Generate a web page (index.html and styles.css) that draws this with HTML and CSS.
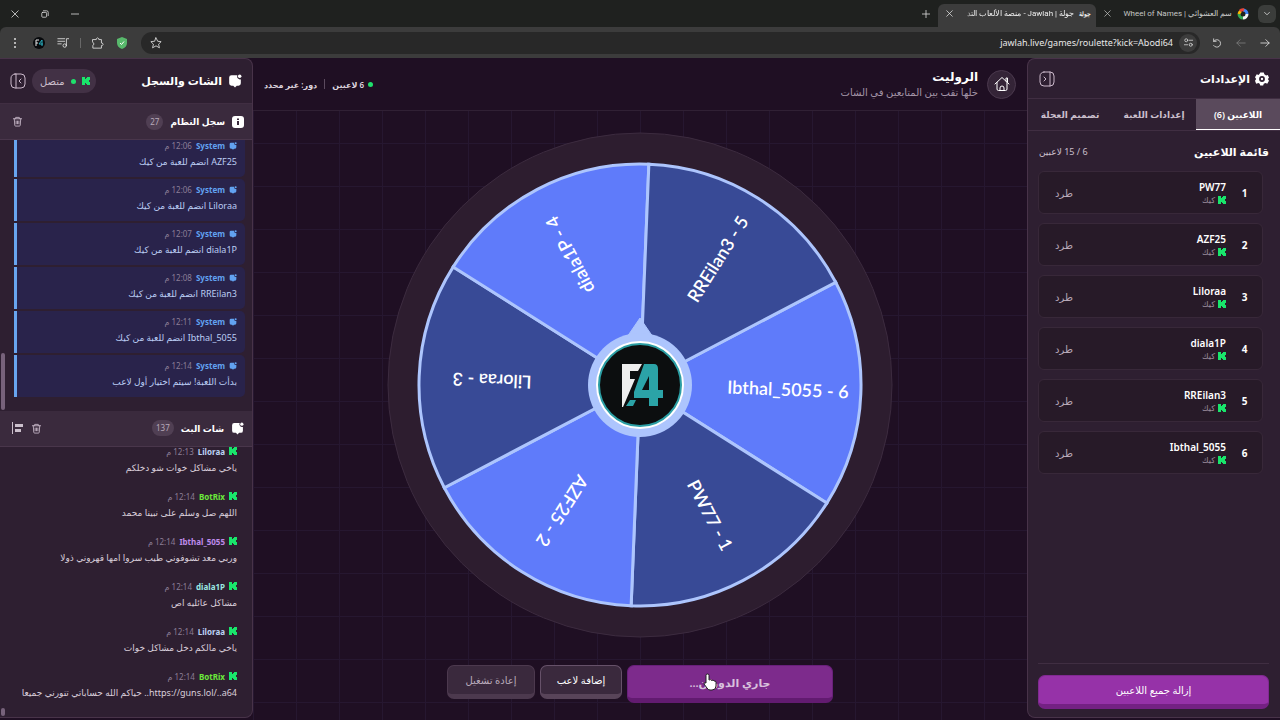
FILE: index.html
```
<!DOCTYPE html>
<html lang="ar" dir="rtl">
<head>
    <meta charset="UTF-8">
    <meta name="viewport" content="width=device-width, initial-scale=1.0">
    <title>جولة | Jawlah - منصة الألعاب</title>
    <link rel="stylesheet" href="styles.css">
</head>
<body>
    <!-- Shared icons -->
    <svg class="sprite" aria-hidden="true">
        <symbol id="kick" viewBox="0 0 8 8"><path d="M0 0H3V2H4V1H5V0H8V3H7V4H6.500V4H7V5H8V8H5V7H4V6H3V8H0z"/></symbol>
        <symbol id="chat" viewBox="0 0 24 24"><path d="M6 2h10a5 5 0 0 0 6 7v7a4 4 0 0 1-4 4h-3l-3 3-3-3H6a4 4 0 0 1-4-4V6a4 4 0 0 1 4-4z"/><circle cx="20" cy="4" r="3"/></symbol>
        <symbol id="trash" viewBox="0 0 24 24"><path d="M3 6h18M8 6V3h8v3M5 6l1 14a2 2 0 0 0 2 2h8a2 2 0 0 0 2-2l1-14M9 11v6M12 11v6M15 11v6"/></symbol>
        <symbol id="close" viewBox="0 0 10 10"><path d="M1 1l8 8M9 1L1 9"/></symbol>
    </svg>

    <header class="browser">
        <div class="tab-bar">
            <button class="tab-search" aria-label="Search tabs"><svg class="line" width="8" height="8" viewBox="0 0 10 10"><path d="M2 3l3 3 3-3"/></svg></button>
            <div class="browser-tab">
                <svg width="12" height="12" viewBox="0 0 12 12" fill="none" stroke-width="3"><path d="M6 2a4 4 0 0 1 4 4" stroke="#4285f4"/><path d="M10 6a4 4 0 0 1-4 4" stroke="#f1f3f4"/><path d="M6 10a4 4 0 0 1-4-4" stroke="#34a853"/><path d="M2 6a4 4 0 0 1 2-3" stroke="#fbbc05"/><path d="M3 3a4 4 0 0 1 4-1" stroke="#ea4335"/></svg>
                <span class="tab-title">سم العشوائي | Wheel of Names</span>
                <button aria-label="Close tab"><svg class="line" width="7" height="7"><use href="#close"/></svg></button>
            </div>
            <div class="browser-tab current">
                <span class="favicon">جولة</span>
                <span class="tab-title">جولة | Jawlah - منصة الألعاب التد</span>
                <button aria-label="Close tab"><svg class="line" width="7" height="7"><use href="#close"/></svg></button>
            </div>
            <button class="new-tab" aria-label="New tab"><svg class="line" width="8" height="8" viewBox="0 0 10 10"><path d="M5 0v10M0 5h10"/></svg></button>
            <div class="window-controls">
                <button aria-label="Minimize"><svg class="line" width="8" height="8" viewBox="0 0 10 10"><path d="M0 5h10"/></svg></button>
                <button aria-label="Restore"><svg class="line" width="8" height="8" viewBox="0 0 10 10"><rect x="1" y="3" width="6" height="6" rx="1"/><path d="M3 1h4a2 2 0 0 1 2 2v4"/></svg></button>
                <button aria-label="Close"><svg class="line" width="8" height="8"><use href="#close"/></svg></button>
            </div>
        </div>
        <div class="toolbar">
            <button aria-label="Forward"><svg class="line" width="10" height="10" viewBox="0 0 12 12"><path d="M1 6h10M7 2l4 4-4 4"/></svg></button>
            <button class="dim" aria-label="Back"><svg class="line" width="10" height="10" viewBox="0 0 12 12"><path d="M11 6H1M5 2L1 6l4 4"/></svg></button>
            <button aria-label="Reload"><svg class="line" width="10" height="10" viewBox="0 0 12 12"><path d="M2 4a4.500 4.500 0 1 1 0 5M2 1v3h3"/></svg></button>
            <div class="address">
                <button class="site-info" aria-label="Site information"><svg class="line" width="9" height="9" viewBox="0 0 12 12"><circle cx="3" cy="3" r="2"/><path d="M7 3h5M0 9h5"/><circle cx="9" cy="9" r="2"/></svg></button>
                <input type="text" dir="ltr" value="jawlah.live/games/roulette?kick=Abodi64" aria-label="Address">
                <button aria-label="Bookmark"><svg class="line" width="12" height="12" viewBox="0 0 14 14"><path d="M7 1l2 4 4 .4-3 3 1 4.200-4-2.300-4 2.300 1-4.200-3-3L5 5z"/></svg></button>
            </div>
            <button aria-label="Shield"><svg width="12" height="12" viewBox="0 0 12 12"><path d="M6 0l5 2v4c0 3-2 5-5 6-3-1-5-3-5-6V2z" fill="#58b96c"/><path d="M4 6l1.500 1.500L8 4.500" fill="none" stroke="#fff"/></svg></button>
            <button aria-label="Extensions"><svg class="line" width="12" height="12" viewBox="0 0 14 14"><path d="M1 3h4V2q1.500-2 3 0v1h3v4h1q2 1.500 0 3h-1v3H1v-3q3-1.500 0-4z"/></svg></button>
            <span class="divider"></span>
            <button aria-label="Media"><svg class="line" width="12" height="12" viewBox="0 0 14 14"><path d="M1 2h8M1 5h8M1 8h4M11 10V2h3"/><circle cx="9" cy="10" r="2"/></svg></button>
            <button aria-label="Profile"><svg width="12" height="12" viewBox="0 0 12 12"><circle cx="6" cy="6" r="6" fill="#07090c"/><path d="M3 9V3h3M3 6h2" fill="none" stroke="#e5e5e5"/><path d="M9 9V3L6 7h4" fill="none" stroke="#2bb0c0"/></svg></button>
            <button aria-label="Menu"><svg width="10" height="12" viewBox="0 0 10 12" fill="#ddd"><circle cx="5" cy="2" r="1"/><circle cx="5" cy="6" r="1"/><circle cx="5" cy="10" r="1"/></svg></button>
        </div>
    </header>

    <div class="app">
        <aside class="panel settings">
            <div class="panel-header">
                <svg width="14" height="14" viewBox="0 0 24 24" fill="#fff" fill-rule="evenodd"><path d="M9 1h6l1 3 3 2 3-1 2 5-2 2 2 3-3 5-3-1-3 1-1 3H9l-1-3-2-1-4 1-2-5 2-3-2-3 3-5 3 1 2-2zM12 7a5 5 0 1 0 0 10 5 5 0 0 0 0-10zm0 3a2 2 0 1 1 0 4 2 2 0 0 1 0-4z"/></svg>
                <h2>الإعدادات</h2>
                <button class="push" aria-label="إخفاء الإعدادات"><svg class="line" width="16" height="16" viewBox="0 0 16 16"><rect x="1" y="1" width="14" height="14" rx="4"/><path d="M11 1v14M5 6l2 2-2 2"/></svg></button>
            </div>
            <nav class="tabs">
                <button class="active">اللاعبين (6)</button>
                <button>إعدادات اللعبة</button>
                <button>تصميم العجلة</button>
            </nav>
            <div class="players-head">
                <h3>قائمة اللاعبين</h3>
                <span>6 / 15 لاعبين</span>
            </div>
            <ol class="players">
                <li><b>1</b><div><strong>PW77</strong><small><svg><use href="#kick"/></svg>كيك</small></div><button>طرد</button></li>
                <li><b>2</b><div><strong>AZF25</strong><small><svg><use href="#kick"/></svg>كيك</small></div><button>طرد</button></li>
                <li><b>3</b><div><strong>Liloraa</strong><small><svg><use href="#kick"/></svg>كيك</small></div><button>طرد</button></li>
                <li><b>4</b><div><strong>diala1P</strong><small><svg><use href="#kick"/></svg>كيك</small></div><button>طرد</button></li>
                <li><b>5</b><div><strong>RREilan3</strong><small><svg><use href="#kick"/></svg>كيك</small></div><button>طرد</button></li>
                <li><b>6</b><div><strong>Ibthal_5055</strong><small><svg><use href="#kick"/></svg>كيك</small></div><button>طرد</button></li>
            </ol>
            <div class="settings-footer">
                <button class="btn btn-purple">إزالة جميع اللاعبين</button>
            </div>
        </aside>

        <main class="game">
            <div class="game-header">
                <a class="home" href="#" aria-label="الرئيسية"><svg class="line" width="16" height="16" viewBox="0 0 16 16"><path d="M1 8l7-6.500L15 8M3 6.500V13q0 1.500 1.500 1.500h7Q13 14.500 13 13V6.500M12 5V2h1.500v4M6 14v-2a2 2 0 0 1 4 0v2"/></svg></a>
                <div class="game-title">
                    <h1>الروليت</h1>
                    <p>خلها تقب بين المتابعين في الشات</p>
                </div>
                <div class="game-status">
                    <span class="players-count"><i class="dot"></i>6 لاعبين</span>
                    <span class="divider"></span>
                    <span>دور: غير محدد</span>
                </div>
            </div>
            <div class="stage">
                <svg class="wheel" viewBox="-253 -253 506 506">
                    <circle r="252" fill="#2d1d2f" stroke="#3c2b3f"/>
                    <g transform="rotate(2.300)">
                        <g stroke="#adc5fd" stroke-width="3">
                            <path fill="#5f7bfa" d="M0 0L191.400-110.500A221 221 0 0 1 191.400 110.500z"/>
                            <path fill="#384a96" d="M0 0L191.400 110.500A221 221 0 0 1 0 221z"/>
                            <path fill="#5f7bfa" d="M0 0L0 221A221 221 0 0 1-191.400 110.500z"/>
                            <path fill="#384a96" d="M0 0L-191.400 110.500A221 221 0 0 1-191.400-110.500z"/>
                            <path fill="#5f7bfa" d="M0 0L-191.400-110.500A221 221 0 0 1 0-221z"/>
                            <path fill="#384a96" d="M0 0L0-221A221 221 0 0 1 191.400-110.500z"/>
                        </g>
                        <g class="wheel-labels">
                            <text x="148" y="5">Ibthal_5055 - 6</text>
                            <text x="148" y="5" transform="rotate(60)">PW77 - 1</text>
                            <text x="148" y="5" transform="rotate(120)">AZF25 - 2</text>
                            <text x="148" y="5" transform="rotate(180)">Liloraa - 3</text>
                            <text x="148" y="5" transform="rotate(240)">diala1P - 4</text>
                            <text x="148" y="5" transform="rotate(300)">RREilan3 - 5</text>
                        </g>
                    </g>
                    <path d="M0-67L13-48H-13z" fill="#adc5fd" stroke="#adc5fd" stroke-linejoin="round"/>
                    <circle r="52" fill="#adc5fd"/>
                    <circle r="44" fill="#fff"/>
                    <circle r="41" fill="#0c0e0f" stroke="#2b9ea4" stroke-width="2"/>
                    <!-- centre logo -->
                    <path fill="#eee" d="M-18-21H2L-2-14H-10V-6H-5L-17 22H-18z"/>
                    <path fill="#2ba3a7" d="M4-21H14Q18-21 18-16V5H23V13H18V21H9V13H-6V7zM9-9L2 5H9zM-10 15H-4L-7 21H-14z"/>
                </svg>
                <div class="actions">
                    <button class="btn btn-spin">جاري الدوران...
                        <svg class="pointer" width="14" height="18" viewBox="0 0 14 18"><path d="M3 10V2.500a1.500 1.500 0 0 1 3 0V7q2-1 2.500.5 2-1 2.500.5 2-.5 2 1.500V13q0 4-4 4H7q-2 0-3-2L1 11q0-2 2-1z" fill="#fff" stroke="#222"/></svg>
                    </button>
                    <button class="btn btn-light">إضافة لاعب</button>
                    <button class="btn btn-muted">إعادة تشغيل</button>
                </div>
            </div>
        </main>

        <aside class="panel feed">
            <div class="panel-header">
                <svg width="14" height="14" fill="#fff"><use href="#chat"/></svg>
                <h2>الشات والسجل</h2>
                <span class="connection push"><svg width="8" height="8" fill="#19e56b"><use href="#kick"/></svg><i class="dot"></i>متصل</span>
                <button aria-label="إخفاء الشات"><svg class="line" width="16" height="16" viewBox="0 0 16 16"><rect x="1" y="1" width="14" height="14" rx="4"/><path d="M6 1v14M11 6L9 8l2 2"/></svg></button>
            </div>
            <div class="section-head">
                <svg width="12" height="12" viewBox="0 0 12 12"><rect width="12" height="12" rx="3" fill="#fff"/><path d="M6 5v4M6 2.500v1.500" stroke="#3a2a3d" stroke-width="2"/></svg>
                <h3>سجل النظام</h3>
                <span class="count">27</span>
                <button class="push" aria-label="مسح السجل"><svg class="line" width="11" height="11"><use href="#trash"/></svg></button>
            </div>
            <section class="log">
                <article><p class="meta"><svg><use href="#chat"/></svg><b>System</b><time>12:06 م</time></p><p>AZF25 انضم للعبة من كيك</p></article>
                <article><p class="meta"><svg><use href="#chat"/></svg><b>System</b><time>12:06 م</time></p><p>Liloraa انضم للعبة من كيك</p></article>
                <article><p class="meta"><svg><use href="#chat"/></svg><b>System</b><time>12:07 م</time></p><p>diala1P انضم للعبة من كيك</p></article>
                <article><p class="meta"><svg><use href="#chat"/></svg><b>System</b><time>12:08 م</time></p><p>RREilan3 انضم للعبة من كيك</p></article>
                <article><p class="meta"><svg><use href="#chat"/></svg><b>System</b><time>12:11 م</time></p><p>Ibthal_5055 انضم للعبة من كيك</p></article>
                <article><p class="meta"><svg><use href="#chat"/></svg><b>System</b><time>12:14 م</time></p><p>بدأت اللعبة! سيتم اختيار أول لاعب</p></article>
            </section>
            <div class="section-head">
                <svg width="13" height="13" fill="#fff"><use href="#chat"/></svg>
                <h3>شات البث</h3>
                <span class="count">137</span>
                <button class="push" aria-label="مسح الشات"><svg class="line" width="11" height="11"><use href="#trash"/></svg></button>
                <button aria-label="محاذاة"><svg width="11" height="12" viewBox="0 0 11 12" fill="#cbbfcc"><path d="M0 0h1v12H0zM3 2h8v3H3zM3 7h6v3H3z"/></svg></button>
            </div>
            <section class="chat">
                <article><p class="meta ice"><svg><use href="#kick"/></svg><b>Liloraa</b><time>12:13 م</time></p><p>ياخي مشاكل خوات شو دخلكم</p></article>
                <article><p class="meta lime"><svg><use href="#kick"/></svg><b>BotRix</b><time>12:14 م</time></p><p>اللهم صل وسلم على نبينا محمد</p></article>
                <article><p class="meta violet"><svg><use href="#kick"/></svg><b>Ibthal_5055</b><time>12:14 م</time></p><p>وربي معد تشوفوني طيب سروا امها قهروني ذولا</p></article>
                <article><p class="meta aqua"><svg><use href="#kick"/></svg><b>diala1P</b><time>12:14 م</time></p><p>مشاكل عائليه اص</p></article>
                <article><p class="meta ice"><svg><use href="#kick"/></svg><b>Liloraa</b><time>12:14 م</time></p><p>ياخي مالكم دخل مشاكل خوات</p></article>
                <article><p class="meta lime"><svg><use href="#kick"/></svg><b>BotRix</b><time>12:14 م</time></p><p>https://guns.lol/..a64.. حياكم الله حساباتي تنورني جميعا</p></article>
            </section>
        </aside>
    </div>
</body>
</html>
```
FILE: styles.css
```
* { box-sizing: border-box; }
body { margin: 0; height: 100vh; display: flex; flex-direction: column; overflow: hidden; background: #1f0f23; color: #fff; font-family: "Noto Sans", "DejaVu Sans", sans-serif; font-size: 9px; }
h1, h2, h3, p, ol { margin: 0; padding: 0; }
button { border: 0; padding: 0; background: none; color: inherit; font: inherit; cursor: pointer; display: flex; align-items: center; justify-content: center; flex: none; }
svg { flex: none; }
.sprite { position: absolute; width: 0; height: 0; }
.line { fill: none; stroke: currentColor; stroke-width: 1; stroke-linecap: round; stroke-linejoin: round; }
.push { margin-right: auto; }
.dot { width: 5px; height: 5px; border-radius: 50%; background: #1fe06c; }

/* Browser bar */
.browser { flex: none; color: #dedede; background: #1f211f; }
.tab-bar { height: 27px; display: flex; align-items: center; padding-right: 4px; }
.tab-search { width: 18px; height: 18px; border-radius: 6px; background: #3b3d3b; }
.browser-tab { width: 162px; height: 23px; margin-top: 4px; padding: 0 9px 4px 8px; display: flex; align-items: center; gap: 5px; font-family: Roboto, "Noto Sans", sans-serif; font-size: 8px; color: #c5c7c5; }
.browser-tab.current { width: 158px; padding: 0 5px 4px 8px; background: #3c3c3c; color: #eee; border-radius: 6px 6px 0 0; }
.tab-title { flex: 1; white-space: nowrap; overflow: hidden; }
.current .tab-title { mask-image: linear-gradient(to left, #000 85%, transparent); }
.favicon { font-size: 6px; font-weight: bold; }
.new-tab { width: 24px; height: 24px; }
.window-controls { margin-right: auto; display: flex; }
.window-controls button { width: 30px; height: 26px; }
.toolbar { height: 31px; padding: 0 3px; display: flex; align-items: center; background: #3c3c3c; border-radius: 6px 6px 0 0; }
.toolbar > button { width: 24px; height: 24px; }
.toolbar .dim { color: #7c7c7c; }
.toolbar > .divider { width: 1px; height: 10px; margin: 0 5px; background: #686868; }
.address { flex: 1; height: 22px; margin: 0 5px 0 7px; padding: 0 3px 0 9px; display: flex; align-items: center; gap: 4px; border-radius: 11px; background: #282828; }
.address input { flex: 1; min-width: 0; border: 0; outline: 0; background: none; color: #e8e8e8; font: 9px "Noto Sans", sans-serif; text-align: right; }
.site-info { width: 18px; height: 18px; border-radius: 50%; background: #3c3c3c; }

/* App layout */
.app { flex: 1; min-height: 0; display: grid; grid-template-columns: 253px 1fr 253px; grid-template-rows: minmax(0, 1fr); }
.panel { display: flex; flex-direction: column; min-height: 0; margin-bottom: 2px; background: #2e1f31; border: 1px solid #483349; }
.settings { border-right: 0; border-radius: 8px 0 0 8px; }
.feed { border-left: 0; border-radius: 0 8px 8px 0; overflow: hidden; }
.panel-header { height: 45px; flex: none; padding: 0 11px; display: flex; align-items: center; gap: 5px; border-bottom: 1px solid #402e42; }
.settings .panel-header { height: 40px; }
.panel-header h2 { font-size: 11px; line-height: 16px; }
.panel-header button { color: #cbb9cb; }

/* Settings panel */
.tabs { flex: none; height: 32px; display: grid; grid-template-columns: 84px 1fr 1fr; border-bottom: 1px solid #402e42; color: #cbbfcc; font-weight: 600; }
.tabs .active { background: #5a4a5c; color: #fff; border-bottom: 1px solid #fff; }
.players-head { flex: none; height: 40px; padding: 0 11px; display: flex; align-items: center; justify-content: space-between; color: #cbbfcc; }
.players-head h3 { font-size: 11px; color: #fff; }
.players { list-style: none; flex: 1; min-height: 0; overflow: hidden; padding: 0 17px 0 10px; display: flex; flex-direction: column; gap: 9px; }
.players li { height: 43px; flex: none; padding: 0 13px 0 16px; display: flex; align-items: center; gap: 14px; background: #271a28; border: 1px solid #382839; border-radius: 6px; }
.players b { width: 9px; font-size: 10px; text-align: center; }
.players div { flex: 1; }
.players strong { display: block; font-size: 10px; line-height: 14px; font-weight: 600; }
.players small { display: flex; align-items: center; gap: 3px; font-size: 8px; line-height: 12px; color: #9c8d9d; }
.players small svg { width: 8px; height: 8px; fill: #19e56b; }
.players button { color: #b8a9b9; font-size: 10px; }
.settings-footer { margin: 0 11px 0 10px; padding: 11px 0 8px; border-top: 1px solid #402e42; }
.btn { border-radius: 7px; font-size: 10px; white-space: nowrap; }
.btn-purple { width: 100%; height: 34px; background: #9632a8; border: 1px solid #802a91; border-bottom: 5px solid #742183; }

/* Game area */
.game { min-width: 0; display: flex; flex-direction: column; background-image: linear-gradient(90deg, #261730 1px, transparent 1px), linear-gradient(#261730 1px, transparent 1px); background-size: 43px 43px; background-position: 0 42px; }
.game-header { flex: none; height: 53px; padding: 0 11px; display: flex; align-items: center; gap: 9px; background: #1f0f23; border-bottom: 1px solid #302034; }
.home { width: 29px; height: 29px; display: grid; place-items: center; color: #fff; background: #342437; border: 1px solid #4b394e; border-radius: 50%; }
.game-title h1 { font-size: 12px; line-height: 16px; }
.game-title p { font-size: 10px; line-height: 15px; color: #a495a7; }
.game-status { margin-right: auto; display: flex; align-items: center; gap: 7px; color: #ded5df; font-size: 8px; font-weight: 600; }
.players-count { display: flex; align-items: center; gap: 4px; }
.game-status .divider { width: 1px; height: 10px; background: #5b4a5e; }
.stage { flex: 1; min-height: 0; padding: 21px 0 17px; display: flex; flex-direction: column; align-items: center; gap: 27px; }
.wheel { flex: 1 1 0; min-height: 0; width: 100%; direction: ltr; }
.wheel-labels { fill: #fff; font-family: Lato, "Noto Sans", sans-serif; font-size: 18px; font-weight: 600; text-anchor: middle; }
.actions { flex: none; display: flex; align-items: flex-start; gap: 5px; }
.btn-spin { position: relative; width: 206px; height: 38px; background: #7d2b8c; border: 1px solid #68207a; border-bottom: 5px solid #621b70; color: #d8c0dc; font-size: 11px; font-weight: 600; }
.pointer { position: absolute; left: 75px; top: 7px; }
.btn-light, .btn-muted { width: 82px; height: 34px; background: #3a293d; border: 1px solid #665169; border-bottom: 5px solid #584459; }
.btn-muted { width: 88px; color: #b9abbb; border-color: #4c394e; }

/* Chat and log */
.connection { height: 24px; padding: 0 6px 0 8px; display: flex; align-items: center; gap: 6px; background: #423145; border-radius: 12px; color: #cbbfcc; font-size: 10px; }
.feed .panel-header { padding: 0 10px; gap: 6px; }
.section-head { flex: none; height: 36px; padding: 0 8px 0 11px; display: flex; align-items: center; gap: 7px; background: #3a2a3d; border-bottom: 1px solid #49364b; }
.section-head h3 { font-size: 9px; }
.section-head button { color: #bfb0c1; width: 12px; }
.section-head .line { stroke-width: 2; }
.count { padding: 0 4px; border-radius: 8px; background: #503f53; color: #b7a9b9; font-size: 8px; line-height: 16px; }
.log, .chat { flex: 256 1 0; min-height: 0; overflow: hidden; position: relative; display: flex; flex-direction: column; justify-content: flex-end; gap: 2px; padding: 0 7px 14px 14px; }
.log article { flex: none; height: 42px; padding: 4px 8px; background: #29234b; border-left: 3px solid #68a5ef; border-radius: 0 5px 5px 0; color: #bbcdf4; }
.log::after, .chat::after { content: ""; position: absolute; left: 1px; bottom: 1px; width: 4px; height: 57px; border-radius: 2px; background: #77627b; }
.meta { display: flex; align-items: center; gap: 4px; height: 14px; color: #62a2f1; font-size: 8px; }
.meta svg { width: 8px; height: 8px; fill: currentColor; }
.meta time { color: #8c7e96; }
article p + p { font-size: 9px; line-height: 17px; white-space: nowrap; }
.chat { flex-grow: 262; gap: 4px; padding: 0 15px 8px 10px; color: #d9ceda; }
.chat article { flex: none; height: 41px; padding-top: 1px; }
.chat p + p { line-height: 20px; }
.chat::after { height: 8px; }
.chat .meta svg { fill: #19e56b; }
.ice { color: #bdd3f5; }
.lime { color: #6be83b; }
.violet { color: #be8bea; }
.aqua { color: #9ce9e3; }
```
